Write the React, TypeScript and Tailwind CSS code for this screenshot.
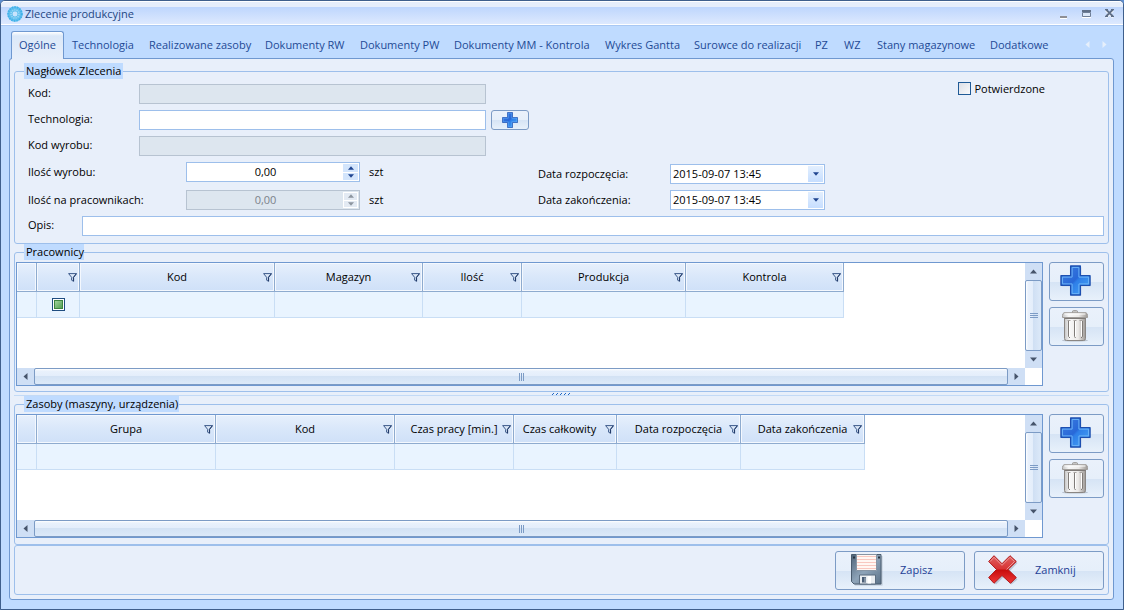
import React from "react";

const tabs = [
  { label: "Ogólne", width: "w-[53px]" },
  { label: "Technologia", width: "w-[77px]" },
  { label: "Realizowane zasoby", width: "w-[116px]" },
  { label: "Dokumenty RW", width: "w-[95px]" },
  { label: "Dokumenty PW", width: "w-[94px]" },
  { label: "Dokumenty MM - Kontrola", width: "w-[151px]" },
  { label: "Wykres Gantta", width: "w-[89px]" },
  { label: "Surowce do realizacji", width: "w-[121px]" },
  { label: "PZ", width: "w-[29px]" },
  { label: "WZ", width: "w-[33px]" },
  { label: "Stany magazynowe", width: "w-[113px]" },
  { label: "Dodatkowe", width: "w-[75px]" },
];

type Column = { label: string; width: string; filter: boolean; tick?: boolean; tight?: boolean };

const workerColumns: Column[] = [
  { label: "", width: "w-[20px]", filter: false },
  { label: "", width: "w-[43px]", filter: true, tick: true },
  { label: "Kod", width: "w-[195px]", filter: true },
  { label: "Magazyn", width: "w-[148px]", filter: true },
  { label: "Ilość", width: "w-[99px]", filter: true },
  { label: "Produkcja", width: "w-[164px]", filter: true },
  { label: "Kontrola", width: "w-[158px]", filter: true },
];

const resourceColumns: Column[] = [
  { label: "", width: "w-[20px]", filter: false },
  { label: "Grupa", width: "w-[179px]", filter: true },
  { label: "Kod", width: "w-[179px]", filter: true },
  { label: "Czas pracy [min.]", width: "w-[119px]", filter: true },
  { label: "Czas całkowity", width: "w-[103px]", filter: true, tight: true },
  { label: "Data rozpoczęcia", width: "w-[124px]", filter: true },
  { label: "Data zakończenia", width: "w-[124px]", filter: true },
];

const buttonFace =
  "rounded-[3px] border border-[#7c9bc5] bg-[linear-gradient(to_bottom,#eaf1fb_0%,#e6effa_50%,#d6e4f5_52%,#e8f1fb_100%)]";

function AppIcon() {
  return (
    <svg width="16" height="16" viewBox="0 0 16 16" aria-hidden="true">
      <circle cx="8" cy="8" r="5" fill="none" stroke="#63c0ee" strokeWidth="5.4" />
      <circle cx="8" cy="8" r="6.8" fill="none" stroke="#3fb0e8" strokeWidth="1.8" strokeDasharray="1.4 1.2" />
      <circle cx="8" cy="8" r="4" fill="none" stroke="#9bd8f5" strokeWidth="1.6" strokeDasharray="1.2 1" />
      <circle cx="8" cy="8" r="2.4" fill="#c9e4fc" />
    </svg>
  );
}

function FilterIcon() {
  return (
    <svg width="9" height="9" viewBox="0 0 9 9" aria-hidden="true">
      <path d="M0.6 0.6H8.4L5.4 4.3V8.2L3.6 7.2V4.3Z" fill="#dbe7f7" stroke="#3c5a8a" strokeWidth="1" />
      <path d="M8.6 0.6L5.6 4.3V8.4" fill="none" stroke="#1f3866" strokeWidth="1" />
    </svg>
  );
}

function PlusIcon({ size }: { size: number }) {
  const id = "plus" + size;
  return (
    <svg width={size} height={size} viewBox="0 0 32 32" aria-hidden="true">
      <defs>
        <linearGradient id={id} x1="0" y1="0" x2="1" y2="1">
          <stop offset="0" stopColor="#3f7fe0" />
          <stop offset="0.48" stopColor="#2868d8" />
          <stop offset="0.54" stopColor="#2f80e8" />
          <stop offset="1" stopColor="#4aa6f8" />
        </linearGradient>
      </defs>
      <path d="M12 2.5H22V12H31.500V22H22V31.500H12V22H2.500V12H12Z" fill="#9aa9bf" opacity="0.5" />
      <path d="M11 1H21V11H31V21H21V31H11V21H1V11H11Z" fill={"url(#" + id + ")"} stroke="#1c4fb0" strokeWidth="1.400" strokeLinejoin="round" />
      <path d="M12.500 2.500H19.500V12.500H29.500V19.500H19.500V29.500H12.500V19.500H2.500V12.500H12.500Z" fill="none" stroke="#6cb4f7" strokeWidth="1" />
    </svg>
  );
}

function TrashIcon() {
  return (
    <svg width="28" height="32" viewBox="0 0 28 32" aria-hidden="true">
      <defs>
        <linearGradient id="bin" x1="0" y1="0" x2="1" y2="0">
          <stop offset="0" stopColor="#c4c4c4" />
          <stop offset="0.25" stopColor="#f8f8f8" />
          <stop offset="0.65" stopColor="#eceae8" />
          <stop offset="1" stopColor="#9c9895" />
        </linearGradient>
      </defs>
      <ellipse cx="14" cy="30.500" rx="13" ry="1" fill="#9aa3af" opacity="0.6" />
      <path d="M11.500 3V1.500Q11.500 0.700 12.500 0.700H15.500Q16.500 0.700 16.500 1.500V3" fill="#d0d0d0" stroke="#95928f" />
      <path d="M3.500 8H24.500V28.500Q24.500 30.500 22.500 30.500H5.500Q3.500 30.500 3.500 28.500Z" fill="url(#bin)" stroke="#8a8683" />
      <path d="M3 2.700H25Q26.500 3.500 26.500 5.500V7.500H1.500V5.500Q1.500 3.500 3 2.700Z" fill="url(#bin)" stroke="#a09d9a" />
      <path d="M3.500 4H24.500" stroke="#ffffff" />
      <path d="M4 8.500H24.500" stroke="#7d7976" />
      <path d="M7.500 11V26.500L9 28M13.500 11V26.500L14.500 28M21.500 11V26.500L20 28" fill="none" stroke="#7f7b78" />
      <path d="M8.500 11V26.500M14.500 11V26.500M20.500 11V26.500" stroke="#ffffff" />
      <path d="M6.500 10.500H9.500M12.500 10.500H15.500M18.500 10.500H21.500" stroke="#a9a5a2" />
    </svg>
  );
}

function DiskIcon() {
  return (
    <svg width="32" height="32" viewBox="0 0 32 32" aria-hidden="true">
      <defs>
        <linearGradient id="disk" x1="0" y1="0" x2="1" y2="1">
          <stop offset="0" stopColor="#4f6479" />
          <stop offset="0.5" stopColor="#8ea4b9" />
          <stop offset="1" stopColor="#5c7288" />
        </linearGradient>
      </defs>
      <path d="M2 2H31.500V31.500H4Z" fill="#9aa7b8" opacity="0.55" />
      <path d="M0.500 0.500H30V30H3L0.500 27.500Z" fill="url(#disk)" stroke="#4a5c6f" />
      <path d="M5.500 0.500H25.500V16.500H5.500Z" fill="#fff7f3" stroke="#8795a4" />
      <path d="M6 2.500H25M6 5.500H25M6 8.500H25M6 11.500H25M6 14.500H25" stroke="#f8c8c0" />
      <path d="M2 2.500H4V4.500H2ZM27 2.500H29V4.500H27Z" fill="#26323f" />
      <path d="M8.500 21H24.500V30H8.500Z" fill="#e9edf1" stroke="#5b6d80" />
      <path d="M11 23H15V28.500H11Z" fill="#4a5d75" />
      <path d="M13.500 23.500H14.500V28H13.500Z" fill="#b9c5d2" />
      <path d="M16.500 22H20V29.500H16.500Z" fill="#ffffff" />
    </svg>
  );
}

function CrossIcon() {
  return (
    <svg width="30" height="30" viewBox="0 0 30 30" aria-hidden="true">
      <defs>
        <linearGradient id="cross" x1="0" y1="0" x2="0" y2="1">
          <stop offset="0" stopColor="#e06060" />
          <stop offset="0.48" stopColor="#d83434" />
          <stop offset="0.52" stopColor="#c80c0c" />
          <stop offset="1" stopColor="#ee3838" />
        </linearGradient>
      </defs>
      <path d="M7.500 2.500L15.500 10.500L22.500 2.500L29.500 8L22 16L29.500 24.500L23.500 29.500L15.500 22L8 29.500L2.500 24L9.500 16L2.500 8Z" fill="#98a2b3" opacity="0.5" />
      <path d="M6 0.700L14 8.700L22 0.700L28.300 6.500L20 14.500L28.300 22.500L22.500 28.300L14 20.500L6 28.300L0.700 22.500L8.500 14.500L0.700 6.500Z" fill="url(#cross)" stroke="#b01818" strokeLinejoin="round" />
      <path d="M2.200 6.500L6 2.300L14 10.300L22 2.300L26.500 6.500L18.500 14.500" fill="none" stroke="#f0a0a0" strokeWidth="0.900" />
    </svg>
  );
}

type Direction = "up" | "down" | "left" | "right";

const arrowPaths: Record<Direction, string> = {
  up: "M3.500 1.500L7 5.500H0Z",
  down: "M0 1.500H7L3.500 5.500Z",
  left: "M1.500 3.500L5.500 0V7Z",
  right: "M5.500 3.500L1.500 0V7Z",
};

function Arrow({ direction, color, size = 7 }: { direction: Direction; color: string; size?: number }) {
  return (
    <svg width={size} height={size} viewBox="0 0 7 7" aria-hidden="true">
      <path d={arrowPaths[direction]} fill={color} />
    </svg>
  );
}

function ScrollArrow({ direction, label }: { direction: Direction; label: string }) {
  return (
    <button type="button" aria-label={label} className="flex size-[17px] shrink-0 items-center justify-center bg-[#cfdff5]">
      <Arrow direction={direction} color="#46546b" />
    </button>
  );
}

function Grid({ name, columns }: { name: string; columns: Column[] }) {
  return (
    <div className="flex min-h-[124px] min-w-0 flex-1 flex-col border border-[#6f98d0] bg-white">
      <div className="flex min-h-0 flex-1">
        <div className="min-w-0 flex-1 overflow-hidden">
          <table aria-label={name} className="table-fixed border-separate border-spacing-0">
            <thead>
              <tr>
                {columns.map((column, i) => (
                  <th
                    key={i}
                    className={
                      column.width +
                      " h-[29px] border-r border-b border-[#8eabcf] bg-[linear-gradient(to_bottom,#e7f0fc,#d9e7fa_50%,#cfe0f8)] p-0 font-normal shadow-[inset_0_0_0_1px_#f4f8fe]"
                    }
                  >
                    <div className={"flex items-center pr-[2px] " + (column.tight ? "pl-0" : "pl-[11px]")}>
                      <span className="flex-1 text-center whitespace-nowrap">{column.label}</span>
                      {column.filter && <FilterIcon />}
                    </div>
                  </th>
                ))}
              </tr>
            </thead>
            <tbody>
              <tr>
                {columns.map((column, i) => (
                  <td key={i} className="h-[26px] border-r border-b border-[#c9def5] bg-[#e9f4ff] p-0">
                    {column.tick && (
                      <input
                        type="checkbox"
                        aria-label="Filtr zaznaczenia"
                        defaultChecked
                        className="mx-auto block size-[13px] appearance-none border border-[#1f4d80] bg-[linear-gradient(135deg,#b5dfb0,#3f9440)] shadow-[inset_0_0_0_1px_#ffffff,inset_0_0_0_2px_#3d8540]"
                      />
                    )}
                  </td>
                ))}
              </tr>
            </tbody>
          </table>
        </div>
        <div className="flex w-[17px] flex-col bg-[#cfdff5]">
          <ScrollArrow direction="up" label="Przewiń w górę" />
          <div className="flex flex-1 flex-col items-center justify-center gap-px rounded-[2px] border border-[#7c9bc5] bg-[linear-gradient(to_right,#ffffff_0,#e9f1fc_2px,#e4eefb_45%,#d0e0f4_50%,#dce9f9_100%)]">
            <span className="h-px w-2 bg-[#7c9bc5]" />
            <span className="h-px w-2 bg-[#7c9bc5]" />
            <span className="h-px w-2 bg-[#7c9bc5]" />
          </div>
          <ScrollArrow direction="down" label="Przewiń w dół" />
        </div>
      </div>
      <div className="flex h-[17px] bg-[#cfdff5]">
        <ScrollArrow direction="left" label="Przewiń w lewo" />
        <div className="flex flex-1 items-center justify-center gap-px rounded-[2px] border border-[#7c9bc5] bg-[linear-gradient(to_bottom,#ffffff_0,#e9f1fc_2px,#e4eefb_45%,#d3e2f4_50%,#dce9f9_100%)]">
          <span className="h-2 w-px bg-[#7c9bc5]" />
          <span className="h-2 w-px bg-[#7c9bc5]" />
          <span className="h-2 w-px bg-[#7c9bc5]" />
        </div>
        <ScrollArrow direction="right" label="Przewiń w prawo" />
        <div className="w-[17px] bg-white" />
      </div>
    </div>
  );
}

function GridGroup({
  title,
  className,
  legendClass,
  columns,
}: {
  title: string;
  className: string;
  legendClass: string;
  columns: Column[];
}) {
  return (
    <fieldset className={"flex min-w-0 flex-col rounded-[3px] border border-[#9dbfeb] pt-[2px] pr-1 pb-[5px] pl-px " + className}>
      <legend className={"ml-2 h-4 bg-[#bfdbff] pl-[2px] leading-4 whitespace-nowrap " + legendClass}>{title}</legend>
      <div className="flex flex-1 gap-[6px]">
        <Grid name={title} columns={columns} />
        <div className="flex w-[55px] flex-col gap-[6px]">
          <button type="button" aria-label="Dodaj" className={"flex h-[39px] items-start pt-[2px] pl-[10px] " + buttonFace}>
            <PlusIcon size={31} />
          </button>
          <button type="button" aria-label="Usuń" className={"flex h-[39px] items-start pt-[2px] pl-[11px] " + buttonFace}>
            <TrashIcon />
          </button>
        </div>
      </div>
    </fieldset>
  );
}

function TextRow({ id, label, disabled, children }: { id: string; label: string; disabled?: boolean; children?: React.ReactNode }) {
  return (
    <div className="flex h-5 items-center">
      <label htmlFor={id} className="w-[111px] pb-[2px]">
        {label}
      </label>
      <input
        id={id}
        type="text"
        disabled={disabled}
        className="h-5 w-[347px] border border-[#9dbfeb] bg-white px-1 outline-none disabled:border-[#b7c3d1] disabled:bg-[#dde6ef]"
      />
      {children}
    </div>
  );
}

function QuantityRow({ id, label, disabled }: { id: string; label: string; disabled?: boolean }) {
  const stepper = disabled ? "bg-[#e3eaf3]" : "bg-[#d3e5fc]";
  const arrow = disabled ? "#8d959f" : "#1f4590";
  return (
    <div className="flex h-5 items-center">
      <label htmlFor={id} className="w-[158px]">
        {label}
      </label>
      <div
        className={
          "flex h-5 w-[174px] border p-px " + (disabled ? "border-[#b7c3d1] bg-[#dde6ef]" : "border-[#9dbfeb] bg-white")
        }
      >
        <input
          id={id}
          type="text"
          defaultValue="0,00"
          disabled={disabled}
          className="min-w-0 flex-1 bg-transparent text-center outline-none disabled:text-[#7b828b]"
        />
        <div className={"flex w-[15px] flex-col gap-px " + (disabled ? "border border-white bg-white" : "")}>
          <button type="button" disabled={disabled} aria-label="Zwiększ" className={"flex flex-1 items-center justify-center " + stepper}>
            <Arrow direction="up" color={arrow} size={6} />
          </button>
          <button type="button" disabled={disabled} aria-label="Zmniejsz" className={"flex flex-1 items-center justify-center " + stepper}>
            <Arrow direction="down" color={arrow} size={6} />
          </button>
        </div>
      </div>
      <span className="ml-[9px]">szt</span>
    </div>
  );
}

function DateRow({ id, label }: { id: string; label: string }) {
  return (
    <div className="flex h-5 items-center">
      <label htmlFor={id} className="w-[132px]">
        {label}
      </label>
      <div className="flex h-5 w-[155px] border border-[#9dbfeb] bg-white p-px">
        <input id={id} type="text" defaultValue="2015-09-07 13:45" className="min-w-0 flex-1 bg-transparent pl-px outline-none" />
        <button
          type="button"
          aria-label="Wybierz datę"
          className="flex w-[15px] items-center justify-center bg-[linear-gradient(to_bottom,#e3effe,#c6deff)]"
        >
          <Arrow direction="down" color="#1f4590" size={6} />
        </button>
      </div>
    </div>
  );
}

export default function App() {
  return (
    <div className="bg-[#5f8fd0]">
      <div className="flex min-h-screen flex-col rounded-t-[5px] border border-[#3f5f8c] bg-[#bfdbff] font-['Open_Sans','Noto_Sans',sans-serif] text-[11px] leading-4 text-black">
        <header className="flex h-[25px] items-center rounded-t-[4px] border-t border-b border-t-white border-b-[#a9c8f3] bg-[linear-gradient(to_bottom,#e6eefb_0,#e6eefb_5px,#bed6fd_5px,#dde9fe_22px,#ffffff_22px)] pr-[2px] pl-[6px] text-[#1e4682]">
          <AppIcon />
          <h1 className="ml-[2px] flex-1">Zlecenie produkcyjne</h1>
          <div className="flex items-center">
            <button type="button" aria-label="Minimalizuj" className="flex w-[23px] justify-center">
              <svg width="11" height="11" viewBox="0 0 11 11" aria-hidden="true">
                <path d="M2 8H9V10H2Z" fill="#8f8f94" />
                <path d="M2 10H9V11H2Z" fill="#ffffff" />
              </svg>
            </button>
            <button type="button" aria-label="Maksymalizuj" className="flex w-[23px] justify-center">
              <svg width="11" height="11" viewBox="0 0 11 11" aria-hidden="true">
                <path d="M1 2H10V4H1Z" fill="#5f6f88" />
                <path d="M1.500 4.500H9.500V8.500H1.500Z" fill="#dce8fa" stroke="#6f7f98" />
                <path d="M1 9.500H10" stroke="#ffffff" />
              </svg>
            </button>
            <button type="button" aria-label="Zamknij okno" className="flex w-[23px] justify-center">
              <svg width="11" height="11" viewBox="0 0 11 11" aria-hidden="true">
                <path d="M2 2.500L9 9.500M9 2.500L2 9.500" stroke="#ffffff" strokeWidth="2" />
                <path d="M2 1.500L9 8.500M9 1.500L2 8.500" stroke="#5f6f88" strokeWidth="1.800" />
                <path d="M1 1.500H4M7 1.500H10M1 8.500H4M7 8.500H10" stroke="#5f6f88" />
              </svg>
            </button>
          </div>
        </header>

        <nav role="tablist" aria-label="Sekcje zlecenia" className="flex h-8 items-end pr-[15px] pl-[10px] text-[#1e4a96]">
          {tabs.map((tab, i) => (
            <button
              key={tab.label}
              type="button"
              role="tab"
              aria-selected={i === 0}
              className={
                "shrink-0 text-left whitespace-nowrap " +
                tab.width +
                (i === 0
                  ? " relative z-10 -mb-px h-[28px] rounded-t-[3px] border border-b-0 border-[#6f98d0] bg-[linear-gradient(to_bottom,#ffffff_0,#dbe8f8_4px,#e8effa_100%)] pb-[2px] pl-[7px]"
                  : " h-[27px] pl-2")
              }
            >
              {tab.label}
            </button>
          ))}
          <div className="flex h-[27px] flex-1 items-center justify-end gap-[10px]">
            <button type="button" aria-label="Poprzednie karty">
              <Arrow direction="left" color="#e6effb" />
            </button>
            <button type="button" aria-label="Następne karty">
              <Arrow direction="right" color="#e6effb" />
            </button>
          </div>
        </nav>

        <main className="mr-[9px] mb-[9px] ml-2 flex flex-1 flex-col rounded-[3px] border border-[#6f98d0] bg-[#e8effa] p-1">
          <fieldset className="min-w-0 rounded-[3px] border border-[#9dbfeb] pt-[5px] pr-1 pb-[7px] pl-[13px]">
            <legend className="-ml-1 h-4 w-[99px] bg-[#bfdbff] pl-[2px] leading-4">Nagłówek Zlecenia</legend>
            <div className="flex items-start justify-between">
              <div className="flex flex-col gap-[6px]">
                <TextRow id="code" label="Kod:" disabled />
                <TextRow id="technology" label="Technologia:">
                  <button
                    type="button"
                    aria-label="Dodaj technologię"
                    className={"ml-[5px] flex h-5 w-[38px] items-center justify-center " + buttonFace}
                  >
                    <PlusIcon size={16} />
                  </button>
                </TextRow>
                <TextRow id="product-code" label="Kod wyrobu:" disabled />
              </div>
              <label className="-mt-[2px] mr-[59px] flex h-[13px] items-center gap-[3px]">
                <input
                  type="checkbox"
                  className="size-[13px] appearance-none border border-[#1f5a96] bg-[linear-gradient(135deg,#dcdfe6,#f8f9fb)]"
                />
                Potwierdzone
              </label>
            </div>
            <div className="mt-[6px] flex items-start">
              <div className="flex w-[510px] flex-col gap-2">
                <QuantityRow id="quantity" label="Ilość wyrobu:" />
                <QuantityRow id="worker-quantity" label="Ilość na pracownikach:" disabled />
              </div>
              <div className="flex flex-col gap-[6px] pt-[2px]">
                <DateRow id="start-date" label="Data rozpoczęcia:" />
                <DateRow id="end-date" label="Data zakończenia:" />
              </div>
            </div>
            <div className="mt-[6px] flex h-5 items-center">
              <label htmlFor="description" className="w-[54px] pb-[2px]">
                Opis:
              </label>
              <input id="description" type="text" className="h-5 min-w-0 flex-1 border border-[#9dbfeb] bg-white px-1 outline-none" />
            </div>
          </fieldset>

          <GridGroup title="Pracownicy" className="flex-none" legendClass="w-[60px]" columns={workerColumns} />

          <div className="flex h-1 flex-col items-center justify-end border-b border-[#c3daf6]">
            <svg width="19" height="2" viewBox="0 0 19 2" aria-hidden="true">
              <path d="M0 1H1V2H0ZM1 0H2V1H1ZM4 1H5V2H4ZM5 0H6V1H5ZM8 1H9V2H8ZM9 0H10V1H9ZM12 1H13V2H12ZM13 0H14V1H13ZM16 1H17V2H16ZM17 0H18V1H17Z" fill="#1f66c4" />
            </svg>
          </div>

          <GridGroup title="Zasoby (maszyny, urządzenia)" className="flex-1" legendClass="w-[155px]" columns={resourceColumns} />

          <footer className="flex justify-end gap-[9px] rounded-[3px] border border-[#9dbfeb] pt-[5px] pr-1 pb-1 text-[#1e3f96]">
            <button type="button" className={"flex h-[39px] w-[130px] items-center pb-[2px] pl-[15px] " + buttonFace}>
              <DiskIcon />
              <span className="ml-[17px]">Zapisz</span>
            </button>
            <button type="button" className={"flex h-[39px] w-[130px] items-center pb-[2px] pl-[13px] " + buttonFace}>
              <CrossIcon />
              <span className="ml-[17px]">Zamknij</span>
            </button>
          </footer>
        </main>
      </div>
    </div>
  );
}
